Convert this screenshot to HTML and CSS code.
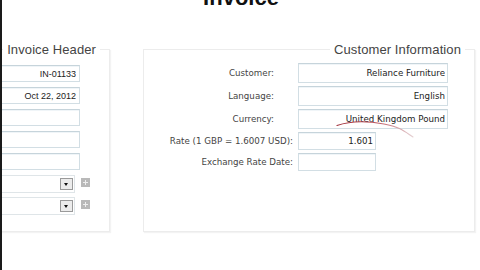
FILE: index.html
```html
<!DOCTYPE html>
<html lang="en">
   <head>
      <title>Invoice</title>
      <link rel="stylesheet" href="styles.css">
   </head>
   <body>
      <h1 class="title">Invoice</h1>

      <div class="forms">

      	<fieldset class="box header">
      		<legend>Invoice Header</legend>
      		<div class="inner">
      			<div class="row"><input class="field" type="text" value="IN-01133"></div>
      			<div class="row"><input class="field" type="text" value="Oct 22, 2012"></div>
      			<div class="row"><input class="field" type="text" value=""></div>
      			<div class="row"><input class="field" type="text" value=""></div>
      			<div class="row"><input class="field" type="text" value=""></div>
      			<div class="row">
      				<div class="combo"><span class="drop"></span></div>
      				<span class="plus"></span>
      			</div>
      			<div class="row">
      				<div class="combo"><span class="drop"></span></div>
      				<span class="plus"></span>
      			</div>
      		</div>
      	</fieldset>

      	<fieldset class="box customer">
      		<legend>Customer Information</legend>
      		<div class="inner grid">
      			<label class="lbl short">Customer:</label>
      			<input class="field wide" type="text" value="Reliance Furniture">
      			<label class="lbl short">Language:</label>
      			<input class="field wide" type="text" value="English">
      			<label class="lbl short">Currency:</label>
      			<input class="field wide" type="text" value="United Kingdom Pound">
      			<label class="lbl">Rate (1 GBP = 1.6007 USD):</label>
      			<input class="field narrow" type="text" value="1.601">
      			<label class="lbl">Exchange Rate Date:</label>
      			<input class="field narrow" type="text" value="">
      		</div>
      	</fieldset>

      </div>

      <!-- pen mark drawn over the currency field -->
      <svg class="mark" width="480" height="270" viewBox="0 0 480 270">
      	<defs>
      		<linearGradient id="ink" x1="337" y1="0" x2="414" y2="0" gradientUnits="userSpaceOnUse">
      			<stop offset="0" stop-color="#a0303a"/>
      			<stop offset="0.45" stop-color="#b84a55"/>
      			<stop offset="1" stop-color="#e6d4d6"/>
      		</linearGradient>
      	</defs>
      	<path d="M337 125.5 C 350 121, 368 121, 384 124 S 404 131, 413 137" fill="none" stroke="url(#ink)" stroke-width="1.1" stroke-linecap="round"/>
      </svg>
   </body>
</html>
```

FILE: styles.css
```css
body{
	margin:0;
	padding:0;
	width:478px;
	height:270px;
	overflow:hidden;
	position:relative;
	background:#fff;
	border-left:2px solid #1a1a1a;
}
.title{
	margin:-13px 0 0 0;
	font-family:"Liberation Sans", Arial, sans-serif;
	font-size:22px;
	line-height:22px;
	font-weight:bold;
	color:#111;
	text-align:center;
}
.forms{
	display:flex;
	align-items:flex-start;
	margin-top:33px;
}
.box{
	margin:0;
	padding:0;
	box-sizing:border-box;
	border:1px solid #ececec;
	box-shadow:1px 1px 1px #f3f3f3;
	min-width:0;
	height:190px;
}
.box legend{
	margin-left:auto;
	margin-right:9px;
	padding:0 4px;
	font-family:"Liberation Sans", Arial, sans-serif;
	font-size:13px;
	line-height:15px;
	letter-spacing:0.1px;
	color:#444;
}
.header{
	width:150px;
	margin-left:-42px;
}
.header .inner{
	padding:8px 19px 0 10px;
}
.customer{
	width:332px;
	margin-left:33px;
}
.customer .inner{
	padding:6px 26px 0 0;
}
.row{
	display:flex;
	align-items:flex-start;
	height:17px;
	margin-bottom:5px;
}
.field{
	box-sizing:border-box;
	height:17px;
	margin:0;
	padding:0 3px;
	border:1px solid #d2dee4;
	border-top-color:#c6d4db;
	background:#fff;
	box-shadow:inset 0 1px 0 #f0f5f8;
	font-family:"Liberation Sans", Arial, sans-serif;
	font-size:9px;
	color:#222;
	text-align:right;
	outline:none;
}
.row .field{
	flex:1;
	min-width:0;
	margin-right:10px;
}
.combo{
	box-sizing:border-box;
	flex:1;
	height:18px;
	border:1px solid #dfe5e8;
	background:#fff;
	display:flex;
	align-items:center;
	justify-content:flex-end;
	padding-right:1px;
}
.drop{
	box-sizing:border-box;
	width:13px;
	height:12px;
	border:1px solid #9a9a9a;
	background:#ececec;
	position:relative;
}
.drop:after{
	content:'';
	position:absolute;
	left:3px;
	top:4px;
	border-left:2.5px solid transparent;
	border-right:2.5px solid transparent;
	border-top:3px solid #111;
}
.plus{
	width:9px;
	height:9px;
	margin:3px 0 0 6px;
	background:#b9b9b9;
	position:relative;
}
.plus:before,
.plus:after{
	content:'';
	position:absolute;
	background:#eee;
}
.plus:before{
	left:2px;
	top:4px;
	width:5px;
	height:1px;
}
.plus:after{
	left:4px;
	top:2px;
	width:1px;
	height:5px;
}
.grid{
	display:grid;
	grid-template-columns:149px 150px;
	column-gap:5px;
	row-gap:3px;
	align-items:center;
}
.lbl{
	font-family:"DejaVu Sans", Verdana, sans-serif;
	font-size:8.7px;
	color:#444;
	text-align:right;
}
.lbl.short{
	padding-right:19px;
}
.customer .field{
	height:20px;
	font-family:"DejaVu Sans", Verdana, sans-serif;
	font-size:8.7px;
	padding:0 2px;
}
.customer .narrow{
	width:78px;
	height:18px;
}
.customer .wide{
	width:150px;
}
.mark{
	position:absolute;
	left:-2px;
	top:0;
	pointer-events:none;
}
```
